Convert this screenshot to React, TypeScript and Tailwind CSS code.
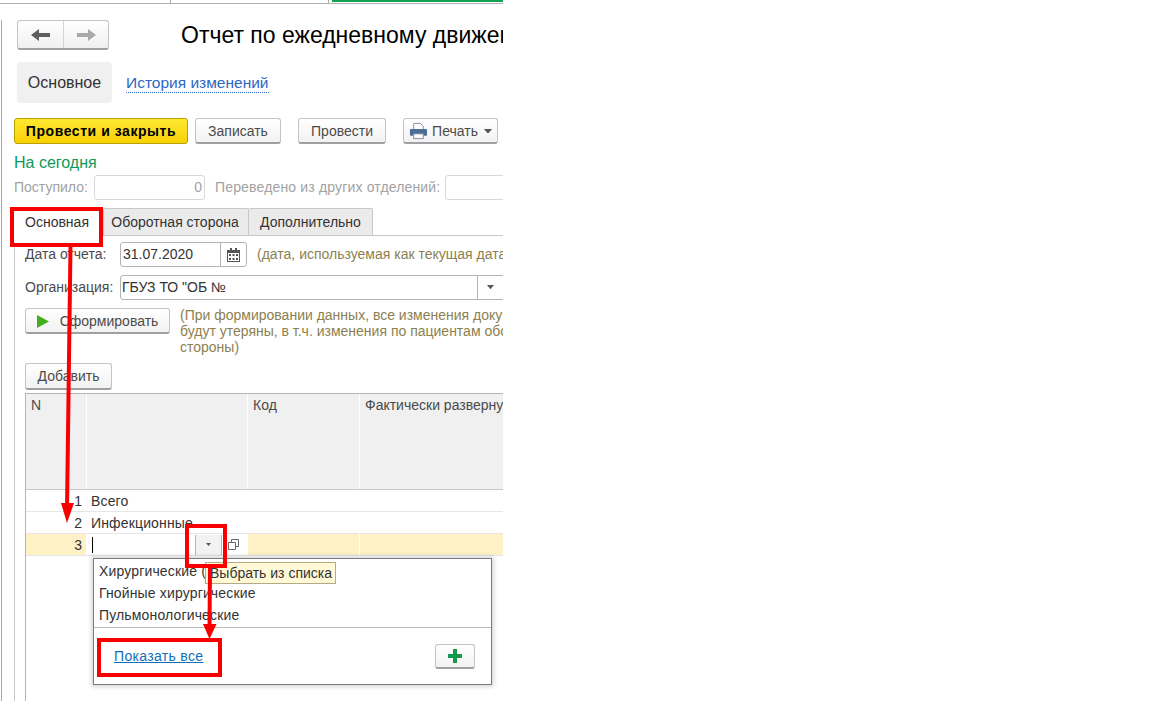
import React from "react";

const font = { fontFamily: '"Liberation Sans", Arial, sans-serif' };

function Btn({ children, className = "" }: { children: React.ReactNode; className?: string }) {
  return (
    <div
      className={
        "flex flex-none items-center justify-center h-[26px] rounded-[3px] border border-[#c4c4c4] border-b-[#a0a0a0] border-b-2 bg-gradient-to-b from-white to-[#f2f2f2] text-[14px] text-[#4b4b4b] pt-[1px] " +
        className
      }
    >
      {children}
    </div>
  );
}

function Caret({ w = 8, color = "#555" }: { w?: number; color?: string }) {
  return (
    <svg width={w} height={w * 0.6} viewBox="0 0 8 4.8">
      <path d="M0 0h8L4 4.8z" fill={color} />
    </svg>
  );
}

function Arrow({ d, fill = "#666" }: { d: string; fill?: string }) {
  return (
    <svg width="20" height="14" viewBox="0 0 20 14">
      <path d={d} fill={fill} />
    </svg>
  );
}

function Row({ n, name }: { n: string; name: string }) {
  return (
    <div className="flex h-[22px] items-center pt-[1px] border-b border-[#e6e6e6] text-[14px] text-[#333]">
      <div className="w-[60px] flex-none pr-[4px] text-right">{n}</div>
      <div className="pl-[5px] tracking-[0.15px]">{name}</div>
    </div>
  );
}

export default function App() {
  return (
    <div style={font} className="relative w-[1152px] h-[701px] overflow-hidden bg-white">
      <div className="relative w-[503px] h-[701px] overflow-hidden">
        {/* top strip */}
        <div className="flex h-[4px] border-b border-[#b0b0b0]">
          <div className="w-[171px] border-r border-[#a8a8a8]" />
          <div className="w-[158px] border-r border-[#a8a8a8]" />
          <div className="ml-[3px] flex-1 h-[2px] bg-[#12a150]" />
        </div>

        <div className="h-[697px] border-l border-[#a8a8a8] ml-[1px] pl-[12px] w-[502px]">
          {/* header */}
          <div className="flex items-center h-[30px] mt-[16px] pl-[3px] w-[540px]">
            <div className="flex flex-none w-[92px] h-[30px] rounded-[3px] border border-[#c4c4c4] border-b-[#a0a0a0] border-b-2 bg-gradient-to-b from-white to-[#f0f0f0]">
              <div className="w-[46px] flex items-center justify-center border-r border-[#d4d4d4]">
                <Arrow d="M0 7l8-6v4h11v4H8v4z" fill="#5e5e5e" />
              </div>
              <div className="flex-1 flex items-center justify-center">
                <Arrow d="M20 7l-8-6v4H1v4h11v4z" fill="#a9a9a9" />
              </div>
            </div>
            <div className="ml-[72px] text-[23px] leading-[28px] text-black whitespace-nowrap">
              Отчет по ежедневному движению
            </div>
          </div>

          {/* form tabs */}
          <div className="flex items-center mt-[12px] ml-[3px]">
            <div className="w-[95px] h-[41px] rounded-[4px] bg-[#f0f0f0] flex items-center justify-center text-[16px] text-[#333]">
              Основное
            </div>
            <div className="ml-[14px] mt-[1px] text-[15.5px] leading-[19px] text-[#2c66c3] border-b border-dotted border-[#2c66c3]">
              История изменений
            </div>
          </div>

          {/* command bar */}
          <div className="flex mt-[15px] w-[520px]">
            <div className="flex-none w-[174px] h-[26px] flex items-center justify-center rounded-[3px] border border-[#b8a000] bg-gradient-to-b from-[#ffe92e] to-[#f8d000] text-[14px] tracking-[0.55px] font-bold text-black">
              Провести и закрыть
            </div>
            <Btn className="w-[86px] ml-[7px]">Записать</Btn>
            <Btn className="w-[88px] ml-[17px]">Провести</Btn>
            <Btn className="w-[95px] ml-[17px] gap-[4px]">
              <svg width="19" height="20" viewBox="0 0 20 20">
                <path d="M5 2h7l3 3v4H5z" fill="#fff" stroke="#7d8da3" />
                <rect x="1" y="8" width="18" height="7" rx="1" fill="#4c6d96" />
                <rect x="5" y="13" width="10" height="5" fill="#fff" stroke="#7d8da3" />
              </svg>
              <span>Печать</span>
              <span className="ml-[2px] flex"><Caret w={8} /></span>
            </Btn>
          </div>

          <div className="mt-[10px] text-[16px] leading-[18px] text-[#0b9a5a]">На сегодня</div>

          {/* totals */}
          <div className="flex items-center mt-[3px] h-[25px] text-[14px] text-[#a2a2a2] whitespace-nowrap w-[560px]">
            <div className="w-[80px] flex-none">Поступило:</div>
            <div className="w-[111px] flex-none h-[25px] rounded-[3px] border border-[#d8d8d8] flex items-center justify-end pr-[2px]">0</div>
            <div className="ml-[10px] w-[230px] flex-none tracking-[0.16px]">Переведено из других отделений:</div>
            <div className="w-[100px] flex-none h-[25px] rounded-[3px] border border-[#d8d8d8]" />
          </div>

          {/* tabs */}
          <div className="flex h-[28px] mt-[8px] border-b border-[#c8c8c8] text-[14px] text-[#333]">
            <div className="w-[89px] h-[28px] bg-white flex items-center justify-center pr-[3px]">Основная</div>
            <div className="w-[146px] h-[27px] bg-[#ebebeb] border border-b-0 border-[#c8c8c8] rounded-t-[2px] flex items-center justify-center pr-[2px]">
              Оборотная сторона
            </div>
            <div className="w-[124px] h-[27px] bg-[#ebebeb] border border-l-0 border-b-0 border-[#c8c8c8] rounded-t-[2px] flex items-center justify-center">
              Дополнительно
            </div>
          </div>

          {/* tab page */}
          <div className="border-l border-[#c8c8c8] pl-[10px] h-[466px] text-[14px] text-[#4a4a4a]">
            <div className="flex items-center h-[25px] mt-[6px] whitespace-nowrap w-[640px]">
              <div className="w-[95px] flex-none">Дата отчета:</div>
              <div className="flex flex-none w-[127px] h-[25px] rounded-[3px] border border-[#b4b4b4] text-[#333]">
                <div className="w-[100px] pl-[2px] flex items-center border-r border-[#b4b4b4]">31.07.2020</div>
                <div className="flex-1 flex items-center justify-center">
                  <svg width="13" height="14" viewBox="0 0 13 14">
                    <path d="M0 2h13v12H0z" fill="#555" />
                    <path d="M3 0h2v3H3zM8 0h2v3H8z" fill="#555" />
                    <path d="M1 5h11v8H1z" fill="#fff" />
                    <path d="M2 6h2v2H2zM5.500 6h2v2h-2zM9 6h2v2H9zM2 10h2v2H2zM5.500 10h2v2h-2zM9 10h2v2H9z" fill="#555" />
                  </svg>
                </div>
              </div>
              <div className="ml-[10px] flex-none text-[#8c7f50]">(дата, используемая как текущая дата для документа)</div>
            </div>

            <div className="flex items-center h-[25px] mt-[8px] whitespace-nowrap w-[520px]">
              <div className="w-[95px] flex-none">Организация:</div>
              <div className="flex flex-none w-[400px] h-[25px] rounded-[3px] border border-[#b4b4b4] text-[#333]">
                <div className="w-[357px] pl-[1px] flex items-center border-r border-[#b4b4b4]">ГБУЗ ТО "ОБ №</div>
                <div className="w-[25px] flex items-center justify-center"><Caret w={7} /></div>
              </div>
            </div>

            <div className="flex mt-[8px] w-[640px]">
              <Btn className="w-[145px] gap-[11px]">
                <svg width="12" height="13" viewBox="0 0 12 13"><path d="M0 0l12 6.500L0 13z" fill="#43b01b" /></svg>
                <span>Сформировать</span>
              </Btn>
              <div className="ml-[10px] -mt-[1px] text-[14px] leading-[16px] text-[#8c7f50] whitespace-nowrap">
                (При формировании данных, все изменения документа
                <br />
                будут утеряны, в т.ч. изменения по пациентам оборотной
                <br />
                стороны)
              </div>
            </div>

            <Btn className="w-[87px] mt-[8px] h-[27px]">Добавить</Btn>

            {/* table */}
            <div className="mt-[3px] h-[308px] border-l border-t border-[#b4b4b4] w-[480px]">
              <div className="flex h-[96px] border-b border-[#c8c8c8] text-[14px] text-[#4a4a4a]">
                <div className="w-[60px] bg-[#f0f0f0] pl-[5px] pt-[1px] mr-[1px]">N</div>
                <div className="w-[160px] bg-[#f0f0f0] mr-[1px]" />
                <div className="w-[111px] bg-[#f0f0f0] mr-[1px] pl-[5px] pt-[1px]">Код</div>
                <div className="flex-1 bg-[#f0f0f0] pl-[5px] pt-[1px] whitespace-nowrap overflow-hidden">Фактически развернуто</div>
              </div>
              <Row n="1" name="Всего" />
              <Row n="2" name="Инфекционные" />
              <div className="flex h-[22px] border-b border-[#e6e6e6] text-[14px] text-[#333]">
                <div className="w-[60px] bg-[#fff1c6] pr-[4px] text-right mr-[1px] leading-[22px]">3</div>
                <div className="w-[160px] mr-[1px] flex items-center pl-[5px]">
                  <div className="w-px h-[16px] bg-black" />
                  <div className="ml-[102px] w-[27px] h-[20px] bg-[#f2f2f2] border-x border-[#b4b4b4] flex items-center justify-center">
                    <Caret w={5} />
                  </div>
                  <svg className="ml-[6px]" width="11" height="11" viewBox="0 0 11 11" fill="none" stroke="#666">
                    <path d="M3.500 3V.5h7v7H8M.5 3.500h7v7h-7z" />
                  </svg>
                </div>
                <div className="w-[111px] bg-[#fff1c6] mr-[1px]" />
                <div className="flex-1 bg-[#fff1c6]" />
              </div>
            </div>
          </div>
        </div>

        {/* dropdown */}
        <div className="absolute left-[93px] top-[558px] w-[399px] h-[127px] border border-[#7a7a7a] bg-white shadow-[0_0_4px_2px_rgba(0,0,0,0.15)] text-[14px] text-[#333] tracking-[0.15px]">
          <div className="pl-[5px] pt-[1px]">
            <div className="h-[22px] leading-[22px]">Хирургические (</div>
            <div className="h-[22px] leading-[22px]">Гнойные хирургические</div>
            <div className="h-[22px] leading-[22px]">Пульмонологические</div>
          </div>
          <div className="mt-[1px] border-t border-[#bdbdbd] flex items-center justify-between h-[57px] pl-[20px] pr-[16px]">
            <span className="text-[#0f6fb8] underline tracking-[0.33px]">Показать все</span>
            <div className="w-[40px] h-[25px] rounded-[3px] border border-[#c4c4c4] border-b-2 border-b-[#a0a0a0] bg-gradient-to-b from-white to-[#f2f2f2] flex items-center justify-center">
              <svg width="14" height="14" viewBox="0 0 14 14"><path d="M5 0h4v5h5v4H9v5H5V9H0V5h5z" fill="#119a4a" /></svg>
            </div>
          </div>
        </div>

        {/* tooltip */}
        <div className="absolute left-[205px] top-[562px] w-[131px] h-[22px] border border-[#b5ab84] bg-[#fff9d8] text-[14px] leading-[21px] text-[#333] pl-[4px] whitespace-nowrap">
          Выбрать из списка
        </div>
      </div>

      {/* red annotations */}
      <div className="absolute left-[10px] top-[207px] w-[93px] h-[40px] border-[4px] border-[#f80000]" />
      <div className="absolute left-[185px] top-[524px] w-[42px] h-[44px] border-[4px] border-[#f80000]" />
      <div className="absolute left-[97px] top-[638px] w-[125px] h-[39px] border-[4px] border-[#f80000]" />
      <svg className="absolute left-0 top-0" width="503" height="701" viewBox="0 0 503 701">
        <path d="M70.500 246L67 510" stroke="#f80000" strokeWidth="4" fill="none" />
        <path d="M61 503h13l-7 20z" fill="#f80000" />
        <path d="M210 568L209.500 628" stroke="#f80000" strokeWidth="4" fill="none" />
        <path d="M203 624h13.500l-7 15z" fill="#f80000" />
      </svg>
    </div>
  );
}
